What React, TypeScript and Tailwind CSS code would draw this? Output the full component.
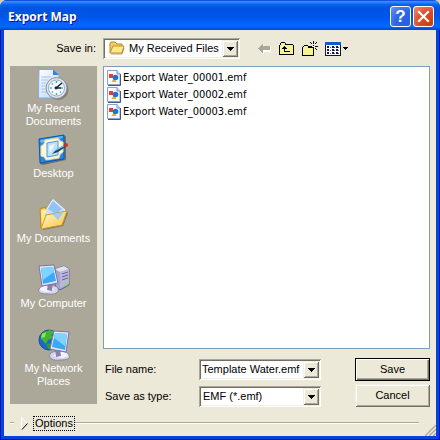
import type { ReactNode } from "react";

const sunken =
  "bg-white shadow-[inset_1px_1px_0_#aca899,inset_-1px_-1px_0_#ffffff,inset_2px_2px_0_#716f64,inset_-2px_-2px_0_#f1efe2]";
const raised =
  "bg-[#ece9d8] shadow-[inset_1px_1px_0_#f1efe2,inset_-1px_-1px_0_#716f64,inset_2px_2px_0_#ffffff,inset_-2px_-2px_0_#aca899]";

const files = ["Export Water_00001.emf", "Export Water_00002.emf", "Export Water_00003.emf"];

function RecentIcon() {
  return (
    <svg width="32" height="32" viewBox="0 0 32 32">
      <defs>
        <linearGradient id="page" x1="0" y1="0" x2="1" y2="1">
          <stop offset="0" stopColor="#ffffff" />
          <stop offset="1" stopColor="#b9d6fb" />
        </linearGradient>
      </defs>
      <path d="M1 0.500H15L21 6V29H0.500Z" fill="url(#page)" stroke="#7fa9e8" />
      <path d="M15 0.500V6H21Z" fill="#3f7fdc" />
      <path d="M3 8H13M3 11H10M3 14H8M3 17H7M3 20H7M3 23H9" stroke="#a3c2f2" />
      <circle cx="20" cy="20.500" r="10.500" fill="#55544e" opacity="0.5" />
      <circle cx="18.500" cy="19" r="10.500" fill="#dfe4e8" stroke="#858f9a" />
      <circle cx="18.500" cy="19" r="8" fill="#f8fcff" stroke="#98abc0" />
      <path d="M18.500 12V14M18.500 24V26M12 19H14M23 19H25M14 14.500L15 15.500M23 23.500L22 22.500M14 23.500L15 22.500" stroke="#3fa9ef" strokeWidth="1.5" />
      <path d="M18 19L24 14M18 19H23" stroke="#182230" strokeWidth="1.6" />
      <circle cx="18" cy="19" r="1.4" fill="#182230" />
    </svg>
  );
}

function DesktopIcon() {
  return (
    <svg width="32" height="32" viewBox="0 0 32 32">
      <path d="M3 7L28 2L28 26L5 31L2 30Z" fill="#454b50" opacity="0.6" />
      <path d="M1 5L26 1V25L2 29Z" fill="#2b86e2" stroke="#0b58b3" />
      <path d="M2 6L25 2L24 4L3 9Z" fill="#68b9fa" />
      <path d="M7 6L20 4Q22 8 25 8V18Q21 20 21 24L8 26Q7 22 3 22V12Q7 11 7 6Z" fill="#fff8d8" stroke="#ecdca0" />
      <path d="M9 9L20 7V21L9 23Z" fill="#bfe1ff" stroke="#4a98e0" />
      <path d="M11 12L17 10L12 19Z" fill="#eff9ff" />
      <path d="M14 20L19 15L28 10L29 12L20 18Z" fill="#1d4266" />
      <path d="M18 16L26 12" stroke="#77c5f4" strokeWidth="1.3" />
      <circle cx="28" cy="11" r="2" fill="#d23219" />
    </svg>
  );
}

function DocumentsIcon() {
  return (
    <svg width="32" height="32" viewBox="0 0 32 32">
      <defs>
        <linearGradient id="folder" x1="0" y1="0" x2="1" y2="1">
          <stop offset="0" stopColor="#fff8c8" />
          <stop offset="1" stopColor="#f6c545" />
        </linearGradient>
      </defs>
      <path d="M5 31L25 27L30 14L27 12L6 29Z" fill="#55523f" opacity="0.6" />
      <path d="M2 10L7 8L9 11L25 9L26 22L3 30Z" fill="#f0bc45" stroke="#c08a22" />
      <path d="M3 11L7 10L8 24L4 28Z" fill="#ffeb9a" />
      <path d="M15 0.500L27 11L20 22L7 13Z" fill="#c4dffd" stroke="#eaf5ff" />
      <path d="M15 2L24 10L18 15L10 10Z" fill="#92c2f7" />
      <path d="M8 16L29 12L24 26L3 30Z" fill="url(#folder)" stroke="#d09a2b" />
      <path d="M14 15L26 13L20 21Z" fill="#9fcdf0" />
    </svg>
  );
}

function Screen() {
  return (
    <>
      <path d="M1 25C3 20 18 20 20 24C22 29 16 31 10 30C4 30-1 29 1 25Z" fill="#d6d6e7" stroke="#8783aa" />
      <ellipse cx="9" cy="25" rx="7" ry="3" fill="#f3f3fb" />
      <path d="M10 19L15 18L14 27L9 26Z" fill="#8782b1" />
      <path d="M1 2L16 1L20 19L4 22Z" fill="#e9e8f5" stroke="#7975a6" />
      <path d="M3 4L15 3L18 17L5 20Z" fill="#3ba9f5" />
      <path d="M3 4L15 3L16 8L5 16Z" fill="#7fd4ff" />
    </>
  );
}

function ComputerIcon() {
  return (
    <svg width="32" height="32" viewBox="0 0 32 32">
      <path d="M17 5L26 2L31 5V21L22 26L17 21Z" fill="#a7a5cb" stroke="#65608f" />
      <path d="M17 5L26 2L31 5L22 8Z" fill="#e3e2f1" />
      <path d="M22 8L31 5V20L22 24Z" fill="#b9b7db" />
      <path d="M24 10L30 8M24 13L30 11M24 16L30 14" stroke="#686394" />
      <path d="M27 21L30 19" stroke="#83ec22" strokeWidth="2" />
      <Screen />
    </svg>
  );
}

function NetworkIcon() {
  return (
    <svg width="32" height="32" viewBox="0 0 32 32">
      <circle cx="11" cy="11" r="10" fill="#1768cf" stroke="#174e99" />
      <path d="M4 4L12 1L17 3L13 6L15 9L10 11L8 15L3 10Z" fill="#44b52c" />
      <path d="M8 15L13 14L14 19L10 20Z" fill="#2d9d30" />
      <path d="M4 5L8 3L7 8L3 9Z" fill="#92e255" />
      <g transform="matrix(-1 0 0 1 32 1)">
        <Screen />
      </g>
    </svg>
  );
}

const places = [
  { label: "My Recent Documents", icon: <RecentIcon /> },
  { label: "Desktop", icon: <DesktopIcon /> },
  { label: "My Documents", icon: <DocumentsIcon /> },
  { label: "My Computer", icon: <ComputerIcon /> },
  { label: "My Network Places", icon: <NetworkIcon /> },
];

function FolderIcon() {
  return (
    <svg width="16" height="16" viewBox="0 0 16 16" className="pointer-events-none absolute left-[6px] top-[2px]">
      <path d="M1 13V3L2 2H6L8 4H13V6" fill="#f3cd61" stroke="#b88b24" />
      <path d="M1 13L4 6H15L13 13Z" fill="#ffe886" stroke="#bd9330" />
      <path d="M2 14H13L15 8" fill="none" stroke="#7c6a3a" opacity="0.6" />
    </svg>
  );
}

function FileIcon() {
  return (
    <svg width="14" height="16" viewBox="0 0 14 16" className="shrink-0">
      <path d="M0.500 0.500H10L13 4V14.500H0.500Z" fill="#f7fafe" stroke="#8ba0d2" />
      <path d="M13.500 4V15.500H1" fill="none" stroke="#43578d" />
      <path d="M10 0.500V4H13" fill="#c8d9f4" stroke="#7e95cb" />
      <path d="M7 8L9.500 12H4.500Z" fill="#f0ae21" />
      <circle cx="8.500" cy="7.500" r="2.800" fill="#1e72d6" />
      <path d="M2 4H6V8H2Z" fill="#e5402b" />
    </svg>
  );
}

function Arrow() {
  return (
    <span className={`flex h-[17px] w-4 items-center justify-center ${raised}`}>
      <svg width="7" height="4" viewBox="0 0 7 4" shapeRendering="crispEdges">
        <path d="M0 0H7V1H6V2H5V3H4V4H3V3H2V2H1V1H0Z" />
      </svg>
    </span>
  );
}

function Select({ id, value, children }: { id: string; value: string; children?: ReactNode }) {
  return (
    <div className={`relative h-[21px] ${sunken}`}>
      {children}
      <select
        id={id}
        className={`h-full w-full appearance-none bg-transparent pr-5 outline-none ${children ? "pl-[26px]" : "pl-1"}`}
      >
        <option>{value}</option>
      </select>
      <span className="pointer-events-none absolute right-[2px] top-[2px]">
        <Arrow />
      </span>
    </div>
  );
}

function Toolbar() {
  return (
    <div className="flex items-center gap-[7px]">
      <button aria-label="Back" className="flex h-5 w-[14px] items-center">
        <svg width="14" height="12" viewBox="0 0 14 12" shapeRendering="crispEdges">
          <path d="M1 6L6 1V4H13V9H6V12Z" fill="#fff" />
          <path d="M0 5L5 0V3H12V7H5V11Z" fill="#aca899" />
        </svg>
      </button>
      <button aria-label="Up one level" className="flex h-5 w-4 items-center">
        <svg width="16" height="14" viewBox="0 0 16 14" shapeRendering="crispEdges">
          <path d="M0 3H1V1H2V0H6V1H7V2H14V3H15V13H0Z" />
          <path d="M1 3H2V1H6V3H14V12H1Z" fill="#f7f294" />
          <path d="M5 4H6V5H7V6H8V7H6V9H11V10H5V7H3V6H4V5H5Z" />
        </svg>
      </button>
      <button aria-label="New folder" className="flex h-5 w-4 items-center">
        <svg width="16" height="16" viewBox="0 0 16 16" shapeRendering="crispEdges">
          <path d="M0 6H1V5H2V4H6V5H7V6H12V15H0Z" />
          <path d="M1 6H2V5H6V7H11V14H1Z" fill="#f7f294" />
          <path d="M11 0H12V3H11ZM11 7H12V10H11ZM7 5H10V6H7ZM13 5H16V6H13ZM8 1H9V2H8ZM9 2H10V3H9ZM14 1H15V2H14ZM13 2H14V3H13ZM13 7H14V8H13ZM14 8H15V9H14ZM11 4H12V5H11Z" />
        </svg>
      </button>
      <button aria-label="View menu" className="flex h-5 items-center gap-[2px]">
        <svg width="16" height="14" viewBox="0 0 16 14" shapeRendering="crispEdges">
          <path d="M0 0H16V14H0Z" fill="#16161c" />
          <path d="M0 0H16V3H0Z" fill="#115bc2" />
          <path d="M1 3H15V13H1Z" fill="#fff" />
          <path d="M2 4H4V6H2ZM7 4H9V6H7ZM11 4H13V6H11ZM2 7H4V9H2ZM7 7H9V9H7ZM11 7H13V9H11ZM2 10H4V12H2ZM7 10H9V12H7ZM11 10H13V12H11Z" fill="#101070" />
          <path d="M5 5H6M9 5H10M13 5H14M5 8H6M9 8H10M13 8H14M5 11H6M9 11H10M13 11H14" stroke="#555" />
        </svg>
        <svg width="5" height="3" viewBox="0 0 5 3" shapeRendering="crispEdges">
          <path d="M0 0H5V1H4V2H3V3H2V2H1V1H0Z" />
        </svg>
      </button>
    </div>
  );
}

function TitleBar() {
  return (
    <header className="flex h-[30px] items-center justify-between rounded-t-[7px] bg-[linear-gradient(#0831d9_0%,#3a8cf8_5%,#2380fa_9%,#0660ec_16%,#0054e3_28%,#0055e8_55%,#005ff8_72%,#0268ff_88%,#0052dc_96%,#0046c8_100%)] pl-2 pr-[6px] pt-[3px]">
      <h1 className="font-['Open_Sans','Noto_Sans',sans-serif] text-[12px] font-bold text-white [text-shadow:1px_1px_#0f1089]">
        Export Map
      </h1>
      <div className="flex gap-[2px]">
        <button
          aria-label="Help"
          className="flex h-[21px] w-[21px] items-center justify-center rounded-[3px] border border-white bg-[radial-gradient(circle_at_85%_85%,#2461e8,#2d65e4_50%,#6b94f0)] font-['Liberation_Sans',sans-serif] text-[17px] leading-none font-bold text-white"
        >
          ?
        </button>
        <button
          aria-label="Close"
          className="flex h-[21px] w-[21px] items-center justify-center rounded-[3px] border border-white bg-[radial-gradient(circle_at_85%_85%,#d43a0c,#dc4c28_50%,#ee8e70)]"
        >
          <svg width="13" height="13" viewBox="0 0 13 13">
            <path d="M2 2L11 11M11 2L2 11" stroke="#fff" strokeWidth="2.2" strokeLinecap="square" />
          </svg>
        </button>
      </div>
    </header>
  );
}

export default function App() {
  return (
    <div className="bg-[#d6d0b8]">
      <div className="flex min-h-screen flex-col rounded-t-[7px] bg-[#0842dd] font-['Liberation_Sans',Arial,sans-serif] text-[11px] leading-[13px] text-black">
        <TitleBar />
        <div className="flex flex-1 border-x border-b border-[#0019a8]">
          <main className="relative mx-[3px] mb-[3px] flex flex-1 flex-col bg-[#ece9d8] px-[6px] pt-2">
            <div className="flex items-center">
              <label htmlFor="save-in" className="w-[93px] pr-[7px] text-right">
                Save in:
              </label>
              <div className="mr-[18px] w-[137px]">
                <Select id="save-in" value="My Received Files">
                  <FolderIcon />
                </Select>
              </div>
              <Toolbar />
            </div>

            <div className="mt-[7px] flex flex-1 gap-[6px]">
              <nav className="w-[87px] shrink-0 bg-[#aca899] pt-[3px] text-white">
                {places.map((place) => (
                  <button key={place.label} className="flex h-[65px] w-full flex-col items-center gap-px px-1">
                    {place.icon}
                    <span>{place.label}</span>
                  </button>
                ))}
              </nav>

              <div className="flex min-w-0 flex-1 flex-col">
                <ul className="flex-1 border border-[#7f9db9] bg-white pt-[2px] pl-[3px] font-['DejaVu_Sans_Condensed','DejaVu_Sans',sans-serif]">
                  {files.map((file) => (
                    <li key={file} className="flex h-[17px] items-center gap-[2px]">
                      <FileIcon />
                      {file}
                    </li>
                  ))}
                </ul>
                <div className="mt-[9px] -mb-[3px] flex items-start justify-between">
                  <div className="grid grid-cols-[96px_122px] items-center gap-y-[6px] pt-px">
                    <label htmlFor="file-name" className="pl-[2px]">
                      File name:
                    </label>
                    <div className={`flex h-[21px] items-center p-[2px] ${sunken}`}>
                      <input
                        id="file-name"
                        defaultValue="Template Water.emf"
                        className="min-w-0 flex-1 bg-transparent pl-px outline-none"
                      />
                      <button aria-label="Show file names">
                        <Arrow />
                      </button>
                    </div>
                    <label htmlFor="save-type" className="pl-[2px]">
                      Save as type:
                    </label>
                    <Select id="save-type" value="EMF (*.emf)" />
                  </div>
                  <div className="flex w-[75px] flex-col gap-[3px]">
                    <button className="h-[23px] border border-black bg-[#ece9d8] shadow-[inset_1px_1px_0_#ffffff,inset_-1px_-1px_0_#716f64,inset_-2px_-2px_0_#aca899]">
                      Save
                    </button>
                    <button className={`h-[23px] ${raised}`}>Cancel</button>
                  </div>
                </div>
              </div>
            </div>

            <div className="mt-[11px] mb-[5px] flex items-center pr-[11px]">
              <span className="w-1 border-t border-b border-t-[#aca899] border-b-white" />
              <button className="flex items-center">
                <svg width="19" height="16" viewBox="0 0 19 16">
                  <path d="M7.500 14V2.500L13.500 8.500" fill="none" stroke="#fff" />
                  <path d="M13.500 8.500L8 14.500" fill="none" stroke="#000" />
                </svg>
                <span className="border border-dotted border-black px-px">Options</span>
              </button>
              <span className="flex-1 border-t border-b border-t-[#aca899] border-b-white" />
            </div>
            <svg width="12" height="12" viewBox="0 0 12 12" className="absolute right-0 bottom-0">
              <path d="M0 12L12 0M4 12L12 4M8 12L12 8" stroke="#fff" />
              <path d="M1 12L12 1M5 12L12 5M9 12L12 9" stroke="#aca899" strokeWidth="1.500" />
            </svg>
          </main>
        </div>
      </div>
    </div>
  );
}
